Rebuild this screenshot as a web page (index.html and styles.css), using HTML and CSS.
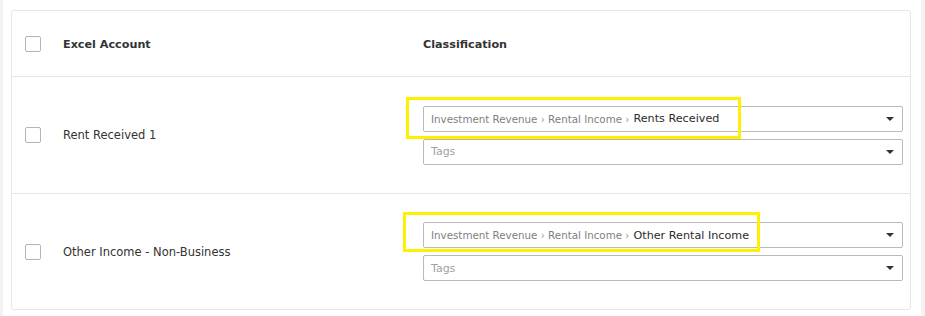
FILE: index.html
```html
<!DOCTYPE html>
<html lang="en">
<head>
    <meta charset="UTF-8">
    <meta name="viewport" content="width=device-width, initial-scale=1.0">
    <title>Account Mapping</title>
    <link rel="stylesheet" href="styles.css">
</head>
<body>

    <div class="page">
        <div class="card">

            <div class="row headRow">
                <div class="checkCell"><span class="checkbox"></span></div>
                <div class="nameCell">Excel Account</div>
                <div class="classCell">Classification</div>
            </div>

            <div class="row">
                <div class="checkCell"><span class="checkbox"></span></div>
                <div class="nameCell">Rent Received 1</div>
                <div class="classCell">
                    <div class="fieldGroup">
                        <span class="highlight highlightOne"></span>
                        <div class="select">
                            <span class="path">Investment Revenue <span class="sep">&rsaquo;</span> Rental Income <span class="sep">&rsaquo;</span></span>
                            <span class="leaf">Rents Received</span>
                            <span class="caret"></span>
                        </div>
                        <div class="select">
                            <span class="placeholder">Tags</span>
                            <span class="caret"></span>
                        </div>
                    </div>
                </div>
            </div>

            <div class="row lastRow">
                <div class="checkCell"><span class="checkbox"></span></div>
                <div class="nameCell">Other Income - Non-Business</div>
                <div class="classCell">
                    <div class="fieldGroup">
                        <span class="highlight highlightTwo"></span>
                        <div class="select">
                            <span class="path">Investment Revenue <span class="sep">&rsaquo;</span> Rental Income <span class="sep">&rsaquo;</span></span>
                            <span class="leaf">Other Rental Income</span>
                            <span class="caret"></span>
                        </div>
                        <div class="select">
                            <span class="placeholder">Tags</span>
                            <span class="caret"></span>
                        </div>
                    </div>
                </div>
            </div>

        </div>
    </div>

</body>
</html>
```

FILE: styles.css
```css
body {
    margin: 0;
    font-family: "DejaVu Sans", Verdana, sans-serif;
    font-size: 11.5px;
    color: #333;
    background-color: #f3f3f3;
}

.page {
    margin-left: 3px;
    width: 918px;
    height: 316px;
    background-color: #fff;
    padding-top: 10px;
    box-sizing: border-box;
}

/* Tabla */
.card {
    margin: 0 10px 0 8px;
    border: 1px solid #e6e6e6;
    border-radius: 3px;
}

.row {
    display: flex;
    align-items: center;
    height: 116px;
    border-bottom: 1px solid #e6e6e6;
}

.headRow {
    height: 63px;
    font-weight: bold;
    font-size: 11.2px;
    padding-top: 2px;
}

.lastRow {
    height: 115px;
    border-bottom: none;
}

.checkCell {
    width: 51px;
    padding-left: 13px;
    box-sizing: border-box;
}

.headRow .checkCell {
    margin-top: -2px;
}

.checkbox {
    display: block;
    width: 14px;
    height: 14px;
    border: 1px solid #b5b5b5;
    border-radius: 2px;
}

.nameCell {
    width: 360px;
}

.classCell {
    flex: 1;
    padding-right: 7px;
}

/* Campos */
.fieldGroup {
    position: relative;
    display: flex;
    flex-direction: column;
    gap: 7px;
    font-size: 11px;
}

.select {
    display: flex;
    align-items: center;
    height: 24px;
    padding: 0 7px;
    border: 1px solid #b9b9b9;
    border-radius: 2px;
}

.path {
    font-size: 10.3px;
    color: #808080;
    margin-right: 4px;
}

.sep {
    color: #999;
}

.leaf {
    font-size: 11.2px;
    color: #2b2b2b;
}

.placeholder {
    color: #a0a0a0;
}

.caret {
    margin-left: auto;
    margin-right: 1px;
    width: 0;
    height: 0;
    border-left: 4px solid transparent;
    border-right: 4px solid transparent;
    border-top: 4px solid #333;
}

/* Marcas amarillas */
.highlight {
    position: absolute;
    border: 3px solid #ffef00;
    pointer-events: none;
}

.highlightOne {
    left: -17px;
    top: -9px;
    width: 329px;
    height: 36px;
}

.highlightTwo {
    left: -20px;
    top: -10px;
    width: 351px;
    height: 34px;
}
```
